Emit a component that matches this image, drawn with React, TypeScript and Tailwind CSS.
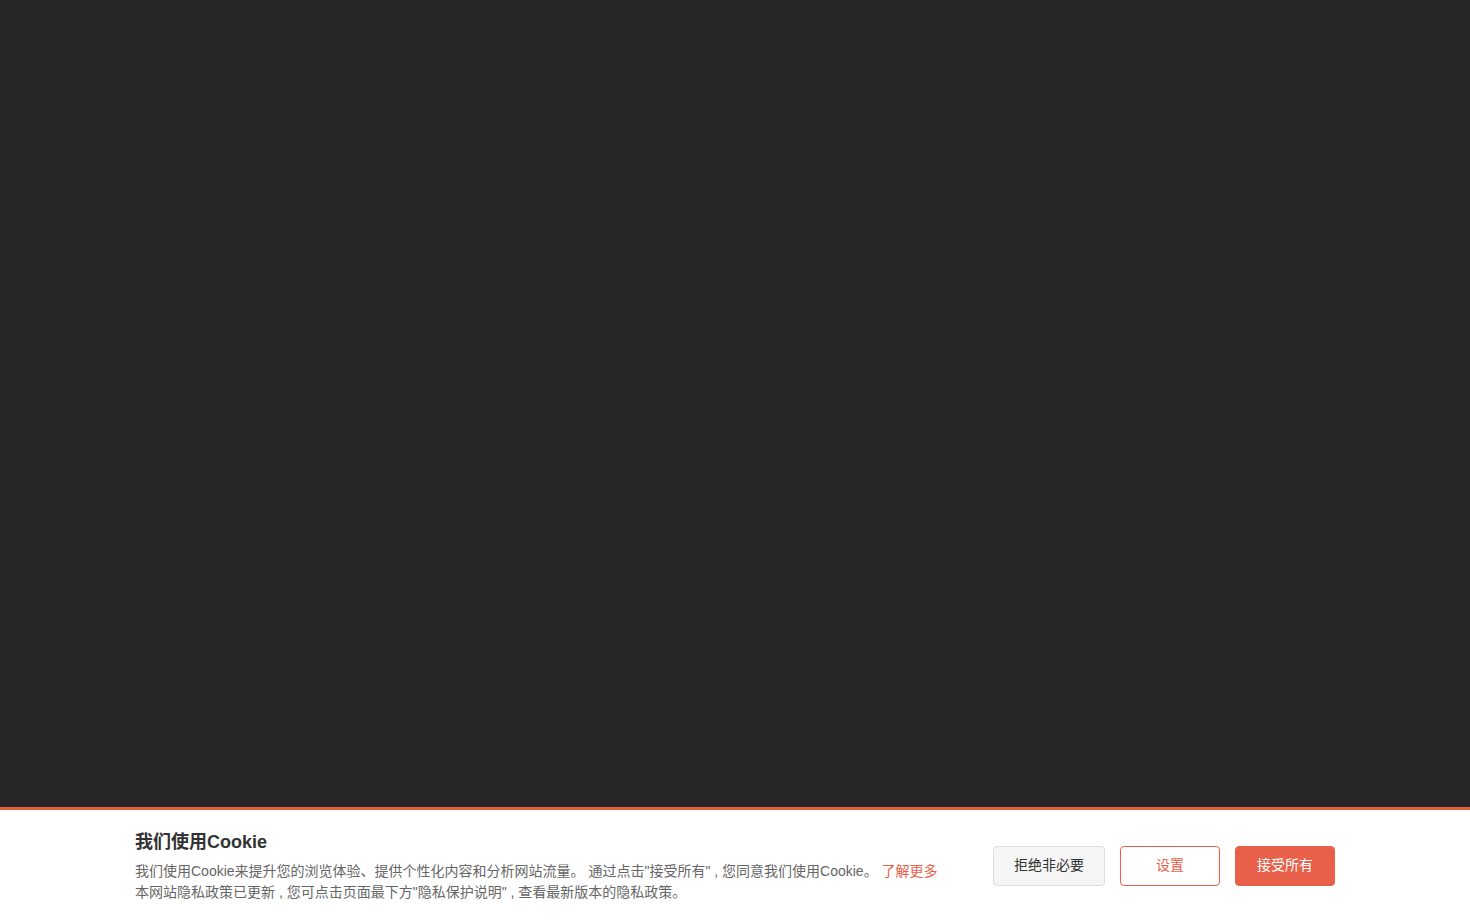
export default function App() {
  return (
    <div className="relative h-[923px] w-full overflow-hidden bg-[#262626] font-['Liberation_Sans','Noto_Sans_CJK_SC',sans-serif]">
      <div className="absolute inset-x-0 bottom-0 border-t-[3px] border-[#e0603f] bg-white">
        <div className="mx-auto flex w-[1200px] items-center pt-5 pb-5">
          <div className="flex-1">
            <h2 className="text-[18px] leading-6 font-bold text-[#333]">我们使用Cookie</h2>
            <p className="mt-[7px] text-[14px] leading-[21px] text-[#666]">
              我们使用Cookie来提升您的浏览体验、提供个性化内容和分析网站流量。 通过点击"接受所有" , 您同意我们使用Cookie。{" "}
              <a className="text-[#e8604a]">了解更多</a>
              <br />
              本网站隐私政策已更新 , 您可点击页面最下方"隐私保护说明" , 查看最新版本的隐私政策。
            </p>
          </div>
          <div className="mb-[2px] flex gap-[15px]">
            <button className="h-10 w-[112px] rounded border border-[#ddd] bg-[#f5f5f5] text-[14px] text-[#333]">拒绝非必要</button>
            <button className="h-10 w-[100px] rounded border border-[#e8604a] bg-white text-[14px] text-[#e8604a]">设置</button>
            <button className="h-10 w-[100px] rounded border border-[#e8604a] bg-[#e8604a] text-[14px] text-white">接受所有</button>
          </div>
        </div>
      </div>
    </div>
  );
}
